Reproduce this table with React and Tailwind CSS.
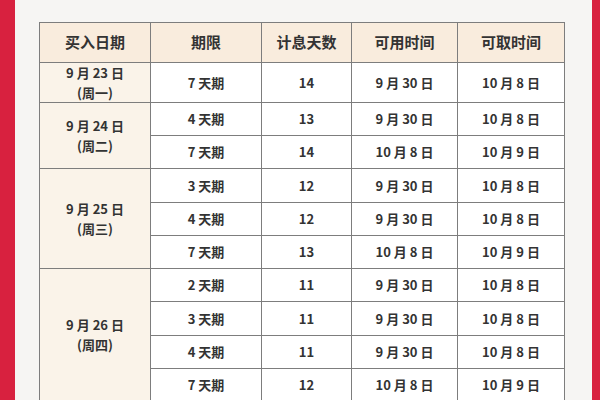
import React from "react";

const groups = [
  {
    date: "9 月 23 日",
    week: "(周一)",
    rows: [["7 天期", "14", "9 月 30 日", "10 月 8 日"]],
  },
  {
    date: "9 月 24 日",
    week: "(周二)",
    rows: [
      ["4 天期", "13", "9 月 30 日", "10 月 8 日"],
      ["7 天期", "14", "10 月 8 日", "10 月 9 日"],
    ],
  },
  {
    date: "9 月 25 日",
    week: "(周三)",
    rows: [
      ["3 天期", "12", "9 月 30 日", "10 月 8 日"],
      ["4 天期", "12", "9 月 30 日", "10 月 8 日"],
      ["7 天期", "13", "10 月 8 日", "10 月 9 日"],
    ],
  },
  {
    date: "9 月 26 日",
    week: "(周四)",
    rows: [
      ["2 天期", "11", "9 月 30 日", "10 月 8 日"],
      ["3 天期", "11", "9 月 30 日", "10 月 8 日"],
      ["4 天期", "11", "9 月 30 日", "10 月 8 日"],
      ["7 天期", "12", "10 月 8 日", "10 月 9 日"],
    ],
  },
];

const spans = {
  1: "row-span-1",
  2: "row-span-2",
  3: "row-span-3",
  4: "row-span-4",
};

const headers = ["买入日期", "期限", "计息天数", "可用时间", "可取时间"];

export default function App() {
  return (
    <div
      className="w-[600px] h-[400px] overflow-hidden flex bg-[#f6f5f3]"
      style={{ fontFamily: '"Noto Sans CJK SC", "Noto Sans", sans-serif' }}
    >
      {/* red frame left */}
      <div className="w-[15px] shrink-0 bg-[#d8213f]" />

      <div className="flex-1 pl-[24px] pt-[22px]">
        <div className="w-[526px] p-px bg-[#7d7d7d]">
          <div className="grid grid-cols-[110px_110px_89px_105px_106px] grid-rows-[39px_39px_32px_32px_33px_32px_32px_32px_33px_32px_32px] gap-px text-[#333] font-bold">
            {headers.map((h) => (
              <div
                key={h}
                className="bg-[#f9ecdd] flex items-center justify-center text-[15px]"
              >
                {h}
              </div>
            ))}
            {groups.map((g) => (
              <React.Fragment key={g.date}>
                <div
                  className={`${spans[g.rows.length]} bg-[#faf3e9] flex flex-col items-center justify-center text-[13px] leading-[20px]`}
                >
                  <span>{g.date}</span>
                  <span>{g.week}</span>
                </div>
                {g.rows.map((r, i) =>
                  r.map((c, j) => (
                    <div
                      key={`${i}-${j}`}
                      className="bg-white flex items-center justify-center text-[13px]"
                    >
                      {c}
                    </div>
                  ))
                )}
              </React.Fragment>
            ))}
          </div>
        </div>
      </div>

      {/* red frame right */}
      <div className="w-[8px] shrink-0 bg-[#d8213f]" />
    </div>
  );
}
